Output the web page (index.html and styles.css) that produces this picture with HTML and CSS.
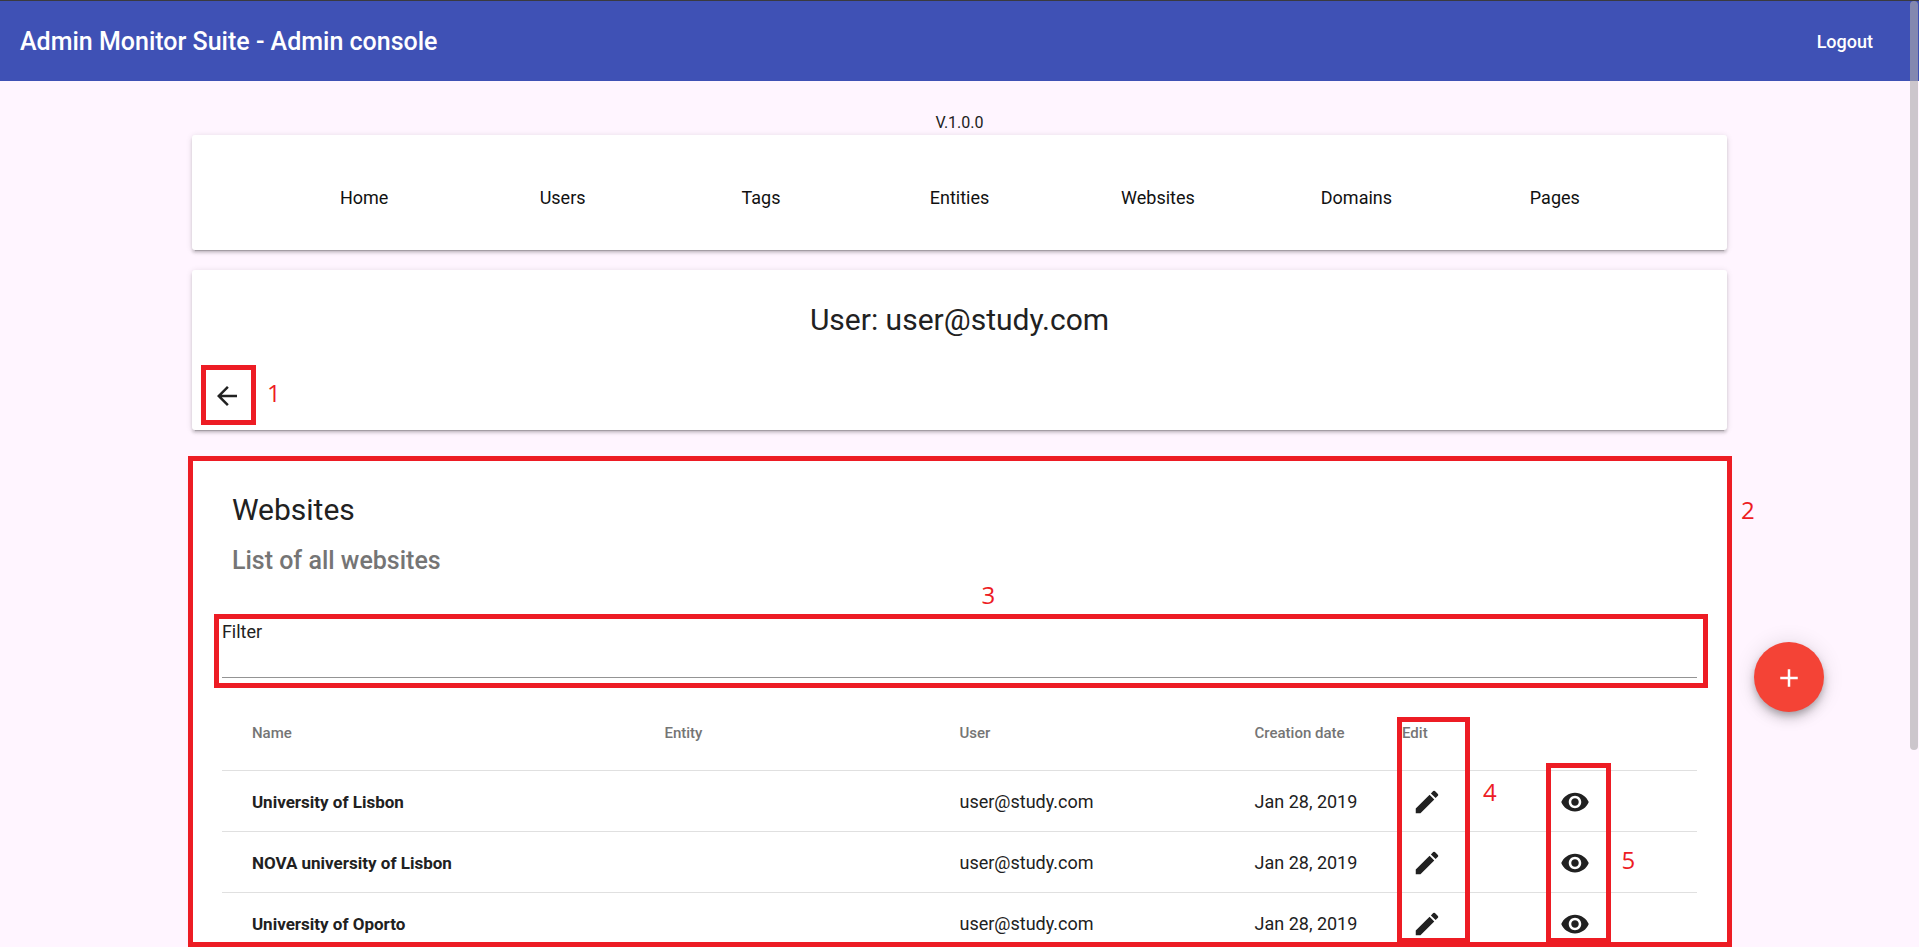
FILE: index.html
```html
<!DOCTYPE html>
<html lang="en">
<head>
<meta charset="utf-8">
<title>Admin Monitor Suite - Admin console</title>
<link rel="stylesheet" href="styles.css">
</head>
<body>
<svg class="sprite" aria-hidden="true">
  <symbol id="back" viewBox="0 0 24 24"><path d="M20 11H7.83l5.59-5.59L12 4l-8 8 8 8 1.41-1.41L7.83 13H20v-2z"/></symbol>
  <symbol id="edit" viewBox="0 0 24 24"><path d="M3 17.25V21h3.75L17.81 9.94l-3.75-3.75L3 17.25zM20.71 7.04a1 1 0 0 0 0-1.41l-2.34-2.34a1 1 0 0 0-1.41 0l-1.83 1.83 3.75 3.75 1.83-1.83z"/></symbol>
  <symbol id="eye" viewBox="0 0 24 24"><path d="M12 4.5C7 4.5 2.73 7.61 1 12c1.73 4.39 6 7.5 11 7.5s9.27-3.11 11-7.5c-1.73-4.39-6-7.5-11-7.5zM12 17c-2.76 0-5-2.24-5-5s2.24-5 5-5 5 2.24 5 5-2.24 5-5 5zm0-8c-1.66 0-3 1.34-3 3s1.34 3 3 3 3-1.34 3-3-1.34-3-3-3z"/></symbol>
  <symbol id="add" viewBox="0 0 24 24"><path d="M19 13h-6v6h-2v-6H5v-2h6V5h2v6h6v2z"/></symbol>
</svg>
<div class="page">
  <header class="toolbar">
    <h1 class="brand">Admin Monitor Suite - Admin console</h1>
    <button class="logout" type="button">Logout</button>
  </header>
  <main class="content">
    <p class="version">V.1.0.0</p>
    <nav class="card menu">
      <a href="#home">Home</a>
      <a href="#users">Users</a>
      <a href="#tags">Tags</a>
      <a href="#entities">Entities</a>
      <a href="#websites">Websites</a>
      <a href="#domains">Domains</a>
      <a href="#pages">Pages</a>
    </nav>
    <section class="card user">
      <h2 class="heading">User: user@study.com</h2>
      <div class="actions">
        <button class="icon-button" type="button" aria-label="Back"><svg class="icon"><use href="#back"/></svg></button>
        <span class="mark mark-back"></span>
        <span class="number number-1">1</span>
      </div>
    </section>
    <section class="card websites">
      <div class="titles">
        <h2 class="heading">Websites</h2>
        <p class="subtitle">List of all websites</p>
      </div>
      <div class="filter">
        <label for="filter">Filter</label>
        <input id="filter" type="text">
        <span class="mark mark-filter"></span>
        <span class="number number-3">3</span>
      </div>
      <div class="table-area">
        <table class="table">
          <thead>
            <tr><th class="col-name">Name</th><th class="col-wide">Entity</th><th class="col-wide">User</th><th>Creation date</th><th>Edit</th><th></th></tr>
          </thead>
          <tbody>
            <tr><td class="name">University of Lisbon</td><td></td><td>user@study.com</td><td>Jan 28, 2019</td>
              <td><button class="icon-button" type="button" aria-label="Edit University of Lisbon"><svg class="icon"><use href="#edit"/></svg></button></td>
              <td><button class="icon-button" type="button" aria-label="View University of Lisbon"><svg class="icon"><use href="#eye"/></svg></button></td></tr>
            <tr><td class="name">NOVA university of Lisbon</td><td></td><td>user@study.com</td><td>Jan 28, 2019</td>
              <td><button class="icon-button" type="button" aria-label="Edit NOVA university of Lisbon"><svg class="icon"><use href="#edit"/></svg></button></td>
              <td><button class="icon-button" type="button" aria-label="View NOVA university of Lisbon"><svg class="icon"><use href="#eye"/></svg></button></td></tr>
            <tr><td class="name">University of Oporto</td><td></td><td>user@study.com</td><td>Jan 28, 2019</td>
              <td><button class="icon-button" type="button" aria-label="Edit University of Oporto"><svg class="icon"><use href="#edit"/></svg></button></td>
              <td><button class="icon-button" type="button" aria-label="View University of Oporto"><svg class="icon"><use href="#eye"/></svg></button></td></tr>
          </tbody>
        </table>
        <span class="mark mark-edit"></span>
        <span class="number number-4">4</span>
        <span class="mark mark-view"></span>
        <span class="number number-5">5</span>
      </div>
      <span class="mark mark-list"></span>
      <span class="number number-2">2</span>
    </section>
  </main>
  <button class="fab" type="button" aria-label="Add"><svg class="icon"><use href="#add"/></svg></button>
  <div class="scroll-thumb"></div>
</div>
</body>
</html>
```

FILE: styles.css
```css
* { box-sizing: border-box; }

body {
  margin: 0;
  background: #fff5ff;
  color: #212121;
  font: 18px/24px Roboto, sans-serif;
}

h1, h2, p { margin: 0; font-weight: 400; }

.sprite { display: none; }

.page {
  position: relative;
  display: flex;
  flex-direction: column;
  height: 100vh;
  overflow: hidden;
}

.toolbar {
  display: flex;
  flex: none;
  align-items: center;
  justify-content: space-between;
  height: 81px;
  padding: 2px 46px 0 20px;
  border-top: 1px solid #3a3a3f;
  background: #3f51b5;
  color: #fff;
}

.brand { font-size: 25px; line-height: 32px; font-weight: 500; }

.logout {
  padding: 0;
  border: 0;
  background: none;
  color: inherit;
  font: 500 18px/24px Roboto, sans-serif;
}

.content {
  display: flex;
  flex: 1;
  flex-direction: column;
  width: 80%;
  min-height: 0;
  margin: 0 auto;
  padding-top: 30px;
}

.version { font-size: 16px; text-align: center; }

.card {
  position: relative;
  border-radius: 3px;
  background: #fff;
  box-shadow: 0 4px 1px -3px rgba(0, 0, 0, .2), 0 3px 3px rgba(0, 0, 0, .14), 0 1px 6px rgba(0, 0, 0, .12);
}

.menu {
  display: grid;
  grid-template-columns: repeat(7, 1fr);
  align-items: center;
  height: 115px;
  padding: 10px 73px 0;
  text-align: center;
}

.menu a { color: #111; text-decoration: none; }

.user { height: 160px; margin-top: 20px; padding-top: 30px; }

.heading { font-size: 30px; line-height: 40px; }
.user .heading { text-align: center; }

.actions { position: relative; margin-top: 31px; padding-left: 10px; }

.icon-button {
  display: flex;
  align-items: center;
  justify-content: center;
  width: 50px;
  height: 50px;
  padding: 0;
  border: 0;
  background: none;
  color: #212121;
}

.icon { width: 30px; height: 30px; fill: currentColor; }

.websites {
  display: flex;
  flex: 1;
  flex-direction: column;
  min-height: 0;
  margin-top: 30px;
  padding: 30px 30px 0;
}

.titles { padding-left: 10px; }
.subtitle { margin-top: 15px; color: #757575; font-size: 25px; line-height: 32px; font-weight: 500; }

.filter { position: relative; margin-top: 43px; }
.filter label { display: block; }

.filter input {
  display: block;
  width: 100%;
  height: 34px;
  padding: 0;
  border: 0;
  border-bottom: 1px solid #949494;
  background: none;
  font: inherit;
  outline: 0;
}

.table-area { position: relative; flex: 1; min-height: 0; margin-top: 23px; }

.table { width: 100%; border-collapse: collapse; table-layout: fixed; }

.table th {
  height: 69px;
  padding: 0 0 4px;
  border-bottom: 1px solid #e0e0e0;
  color: #757575;
  font-size: 15px;
  font-weight: 500;
  text-align: left;
}

.table td { height: 61px; padding: 2px 0 0; border-bottom: 1px solid #e0e0e0; }
.table .name, .table .col-name { padding-left: 30px; }
.name { font-size: 17px; font-weight: 700; }
.col-name { width: 30%; }
.col-wide { width: 20%; }

/* Numbered callouts lie over the interface */
.mark { position: absolute; border: 5px solid #ed1c24; pointer-events: none; }
.number { position: absolute; color: #ed1c24; font: 24px/32px "Open Sans", sans-serif; }

.mark-back { top: -6px; left: 9px; width: 55px; height: 60px; }
.number-1 { top: 6px; left: 75px; }
.mark-list { top: -4px; right: -5px; bottom: 0; left: -4px; }
.number-2 { top: 34px; left: calc(100% + 14px); }
.mark-filter { top: -6px; right: -11px; bottom: -10px; left: -8px; }
.number-3 { top: -41px; left: calc(50% + 22px); }
.mark-edit { top: 16px; bottom: 4px; left: calc(80% - 5px); width: 73px; }
.number-4 { top: 75px; left: calc(80% + 81px); }
.mark-view { top: 62px; bottom: 4px; left: calc(90% - 4px); width: 65px; }
.number-5 { top: 143px; left: calc(90% + 72px); }

.fab {
  position: absolute;
  right: 95px;
  bottom: 235px;
  display: flex;
  align-items: center;
  justify-content: center;
  width: 70px;
  height: 70px;
  padding: 2px 0 0;
  border: 0;
  border-radius: 50%;
  background: #f44336;
  color: #fff;
  box-shadow: 0 4px 6px -1px rgba(0, 0, 0, .2), 0 7px 12px rgba(0, 0, 0, .14), 0 1px 22px rgba(0, 0, 0, .12);
}

.scroll-thumb {
  position: absolute;
  top: 1px;
  right: 1px;
  width: 8px;
  height: 749px;
  border-radius: 4px;
  background: rgba(172, 170, 172, .62);
}
```
